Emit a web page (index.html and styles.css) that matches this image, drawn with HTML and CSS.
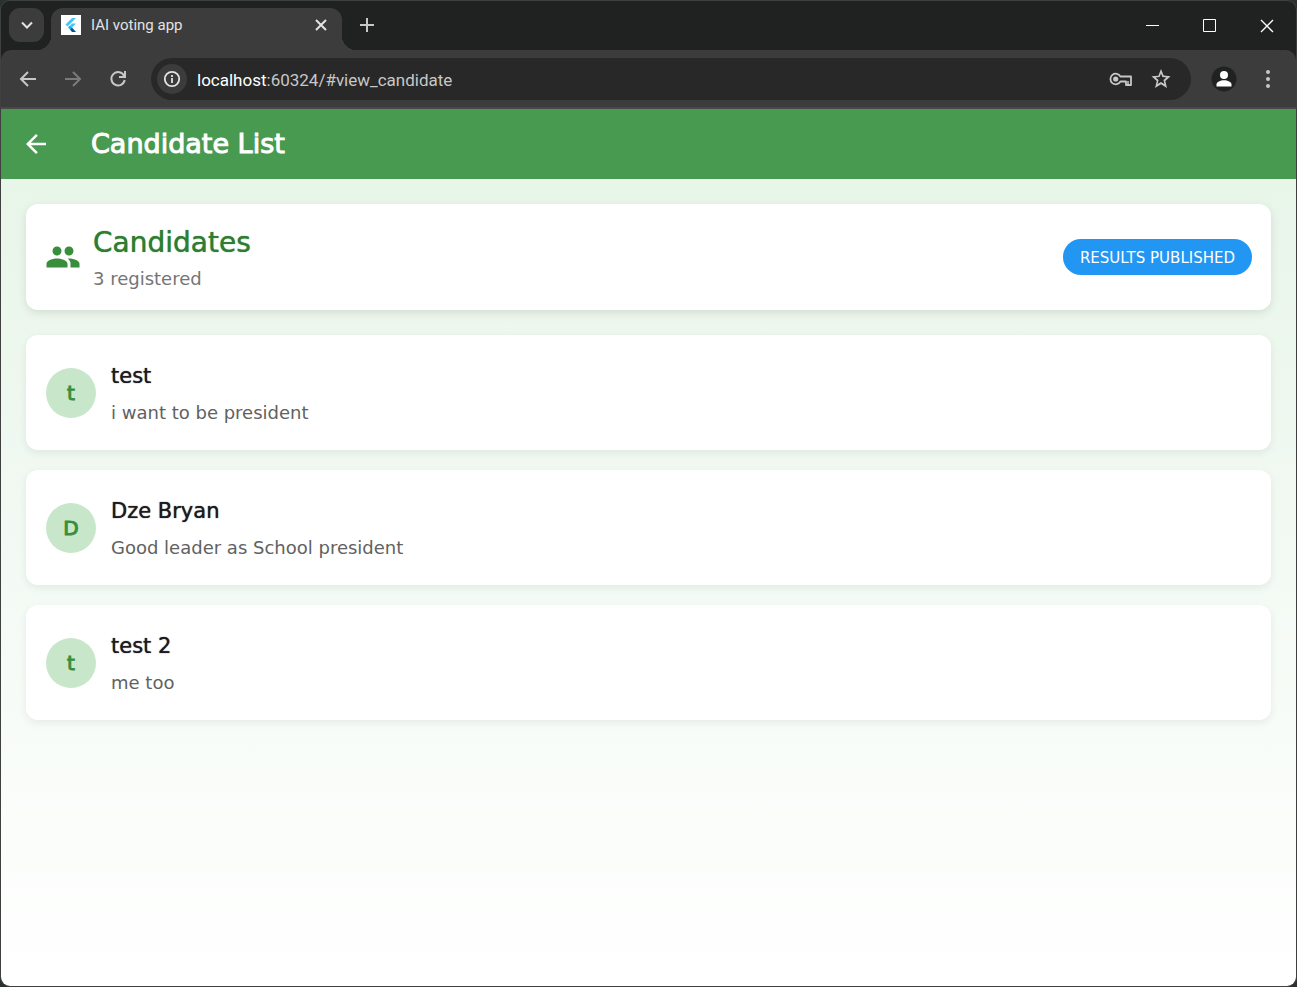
FILE: index.html
```html
<!DOCTYPE html>
<html lang="en">
<head>
<meta charset="utf-8">
<title>IAI voting app</title>
<link rel="stylesheet" href="styles.css">
</head>
<body>
<div class="window">
  <header class="chrome">
    <div class="tabstrip">
      <button class="tab-search" aria-label="Search tabs"><svg width="16" height="16" viewBox="0 0 16 16"><path d="M3 5.500l5 5 5-5" fill="none" stroke="currentColor" stroke-width="2"/></svg></button>
      <div class="tab">
        <svg class="favicon" width="20" height="20" viewBox="0 0 20 20"><path fill="#fff" d="M0 0h20v20H0z"/><path fill="#47c5fb" d="M11 3h4L6.500 11.500 4.500 9.500zM11 8.500h4L11 12.500l-2-2z"/><path fill="#00b5f8" d="M7 12.500l2-2 2 2-2 2z"/><path fill="#00569e" d="M9 14.500l2-2 4 4.500h-4z"/></svg>
        <span class="tab-title">IAI voting app</span>
        <button class="tab-close" aria-label="Close tab"><svg width="12" height="12" viewBox="0 0 12 12"><path d="M1 1l10 10M11 1L1 11" stroke="currentColor" stroke-width="2"/></svg></button>
      </div>
      <button class="new-tab" aria-label="New tab"><svg width="14" height="14" viewBox="0 0 14 14"><path d="M7 0v14M0 7h14" stroke="currentColor" stroke-width="2"/></svg></button>
      <div class="window-controls">
        <button aria-label="Minimize"><svg width="13" height="13" viewBox="0 0 13 13"><path d="M0 6.500h13" stroke="#fff"/></svg></button>
        <button aria-label="Maximize"><svg width="13" height="13" viewBox="0 0 13 13"><path d="M.5.5h12v12H.5z" fill="none" stroke="#fff"/></svg></button>
        <button aria-label="Close"><svg width="14" height="14" viewBox="0 0 14 14"><path d="M1 1l12 12M13 1L1 13" stroke="#fff" stroke-width="1.300"/></svg></button>
      </div>
    </div>
    <div class="toolbar">
      <nav class="nav">
        <button aria-label="Back"><svg width="24" height="24" viewBox="0 0 24 24"><path d="M20 12H5M12 5l-7 7 7 7" fill="none" stroke="currentColor" stroke-width="2"/></svg></button>
        <button class="dim" aria-label="Forward"><svg width="24" height="24" viewBox="0 0 24 24"><path d="M4 12h15M12 5l7 7-7 7" fill="none" stroke="currentColor" stroke-width="2"/></svg></button>
        <button aria-label="Reload"><svg width="24" height="24" viewBox="0 0 24 24"><path d="M18.200 9A6.700 6.700 0 1 0 18.700 13" fill="none" stroke="currentColor" stroke-width="2"/><path d="M19 4v6h-6" fill="none" stroke="currentColor" stroke-width="2"/></svg></button>
      </nav>
      <div class="omnibox">
        <button class="site-info" aria-label="View site information"><svg width="18" height="18" viewBox="0 0 18 18"><circle cx="9" cy="9" r="7.200" fill="none" stroke="currentColor" stroke-width="1.800"/><path d="M9 8v5M9 5v2" stroke="currentColor" stroke-width="1.800"/></svg></button>
        <a class="url" href="#view_candidate"><span class="host">localhost</span>:60324/#view_candidate</a>
        <button class="key" aria-label="Manage passwords"><svg width="24" height="16" viewBox="0 0 24 16"><path d="M11.400 5.500A5.300 5.300 0 1 0 11.400 10.500H17V14h5V5.500z" fill="none" stroke="currentColor" stroke-width="1.800" stroke-linejoin="round"/><path d="M19 14v-4" stroke="currentColor" stroke-width="1.500"/><circle cx="6.700" cy="8" r="2.600" fill="currentColor"/></svg></button>
        <button class="star" aria-label="Bookmark this tab"><svg width="24" height="24" viewBox="0 0 24 24"><path fill="currentColor" d="M21.500 9.240l-6.890-.62L12 2 9.390 8.630 2.500 9.240l5.260 4.730L6.020 21 12 17.270 17.980 21l-1.630-7.030zM12 14.900l-3.360 2.170.9-3.980-3.020-2.680 4.080-.38L12 6.600l1.410 3.440 4.080.38-3.020 2.680.9 3.980z"/></svg></button>
      </div>
      <button class="profile" aria-label="Profile"><svg width="26" height="26" viewBox="0 0 26 26"><circle cx="13" cy="13" r="12.500" fill="#202221"/><circle cx="13" cy="9" r="4" fill="#fff"/><path d="M5.500 20.500v-2c0-2.500 4-4.200 7.500-4.200s7.500 1.700 7.500 4.200v2z" fill="#fff"/></svg></button>
      <button class="menu" aria-label="Menu"><svg width="6" height="20" viewBox="0 0 6 20"><g fill="currentColor"><circle cx="3" cy="3" r="2"/><circle cx="3" cy="10" r="2"/><circle cx="3" cy="17" r="2"/></g></svg></button>
    </div>
  </header>
  <div class="app">
    <header class="appbar">
      <button aria-label="Back"><svg width="30" height="30" viewBox="0 0 24 24"><path fill="currentColor" d="M20 11H7.830l5.590-5.590L12 4l-8 8 8 8 1.410-1.410L7.830 13H20z"/></svg></button>
      <h1>Candidate List</h1>
    </header>
    <main class="content">
      <section class="card summary">
        <svg class="people" width="36" height="36" viewBox="0 0 24 24"><path fill="currentColor" d="M16 11c1.660 0 2.990-1.340 2.990-3S17.660 5 16 5s-3 1.340-3 3 1.340 3 3 3zm-8 0c1.660 0 2.990-1.340 2.990-3S9.660 5 8 5 5 6.340 5 8s1.340 3 3 3zm0 2c-2.330 0-7 1.170-7 3.500V19h14v-2.500c0-2.330-4.670-3.500-7-3.500zm8 0c-.29 0-.62.020-.97.050 1.160.84 1.970 1.970 1.970 3.450V19h6v-2.500c0-2.330-4.670-3.500-7-3.500z"/></svg>
        <div class="summary-text">
          <h2>Candidates</h2>
          <p>3 registered</p>
        </div>
        <span class="badge">RESULTS PUBLISHED</span>
      </section>
      <ul class="list">
        <li class="card candidate"><span class="avatar">t</span><div class="details"><h3>test</h3><p>i want to be president</p></div></li>
        <li class="card candidate"><span class="avatar">D</span><div class="details"><h3>Dze Bryan</h3><p>Good leader as School president</p></div></li>
        <li class="card candidate"><span class="avatar">t</span><div class="details"><h3>test 2</h3><p>me too</p></div></li>
      </ul>
    </main>
  </div>
</div>
</body>
</html>
```
FILE: styles.css
```css
* { box-sizing: border-box; }
body { margin: 0; background: #2b3033; font-family: "DejaVu Sans", sans-serif; }
button { display: flex; align-items: center; justify-content: center; padding: 0; border: 0; background: none; color: inherit; }
svg { display: block; flex: none; }
h1, h2, h3, p, ul { margin: 0; padding: 0; font-weight: 400; }

.window { display: flex; flex-direction: column; min-height: 100vh; border: 1px solid #3f4141; border-radius: 10px; overflow: hidden; background: #202221; }

.chrome { color: #c7c7c7; font-family: Roboto, sans-serif; }
.tabstrip { display: flex; align-items: flex-start; height: 49px; padding: 7px 1px 0 8px; }
.tab-search { width: 35px; height: 34px; border-radius: 11px; background: #3c3c3c; color: #e3e3e3; }
.tab { position: relative; display: flex; align-items: center; width: 291px; height: 42px; margin-left: 7px; padding: 0 15px 8px 10px; border-radius: 12px 12px 0 0; background: #3c3c3c; color: #e3e3e3; }
.tab::before, .tab::after { content: ""; position: absolute; bottom: 0; width: 14px; height: 14px; }
.tab::before { left: -14px; background: radial-gradient(circle at 0 0, transparent 14px, #3c3c3c 14px); }
.tab::after { right: -14px; background: radial-gradient(circle at 100% 0, transparent 14px, #3c3c3c 14px); }
.tab-title { flex: 1; margin-left: 10px; font-size: 15px; line-height: 20px; white-space: nowrap; }
.new-tab { width: 34px; height: 34px; margin-left: 8px; }
.window-controls { display: flex; margin-left: auto; }
.window-controls button { width: 57px; height: 35px; }

.toolbar { display: flex; align-items: center; height: 59px; padding: 0 18px 0 15px; border-radius: 10px 10px 0 0; border-bottom: 2px solid #484848; background: #3c3c3c; }
.nav { display: flex; gap: 21px; }
.dim { color: #7b7b7b; }
.omnibox { display: flex; flex: 1; align-items: center; height: 42px; margin-left: 21px; padding: 0 18px 0 6px; border-radius: 21px; background: #282828; }
.site-info { width: 30px; height: 30px; border-radius: 50%; background: #3c3c3c; color: #e3e3e3; }
.url { flex: 1; margin-left: 10px; padding-top: 2px; color: #c7c7c7; font-size: 17px; line-height: 24px; text-decoration: none; }
.host { color: #fff; }
.star { margin-left: 16px; }
.profile { margin-left: 20px; }
.menu { width: 20px; margin-left: 21px; }

.app { display: flex; flex: 1; flex-direction: column; background: linear-gradient(#e8f5e9 70px, #fff); }
.appbar { display: flex; align-items: center; gap: 40px; height: 70px; padding: 0 20px; background: #489a50; color: #fff; }
.appbar h1 { font-size: 27px; line-height: 34px; -webkit-text-stroke: 1px; }
.content { padding: 25px; }
.card { border-radius: 12px; background: #fff; }
.summary { display: flex; align-items: center; min-height: 106px; padding: 18px 19px; box-shadow: 0 3px 10px rgb(0 0 0 / 10%); }
.people { color: #388e3c; }
.summary-text { flex: 1; margin-left: 12px; }
.summary-text h2 { color: #2e7d32; font-size: 28px; line-height: 38px; text-shadow: 0 0 1px currentColor; }
.summary-text p { margin-top: 4px; color: #757575; font-size: 18px; line-height: 25px; }
.badge { padding: 7px 17px 5px; border-radius: 18px; background: #2196f3; color: #fff; font-size: 15px; line-height: 24px; }
.list { display: grid; gap: 20px; margin-top: 25px; list-style: none; }
.candidate { display: flex; align-items: center; gap: 15px; min-height: 115px; padding: 20px; box-shadow: 0 3px 8px rgb(0 0 0 / 7%); }
.avatar { display: grid; place-items: center; width: 50px; height: 50px; border-radius: 50%; background: #c8e6c9; color: #388e3c; font-size: 20px; -webkit-text-stroke: 1px; }
.details { padding-top: 2px; }
.candidate h3 { color: #1d1b20; font-size: 21px; line-height: 28px; text-shadow: 0 0 1px currentColor; }
.candidate p { margin-top: 10px; color: #616161; font-size: 18px; line-height: 25px; }
```
